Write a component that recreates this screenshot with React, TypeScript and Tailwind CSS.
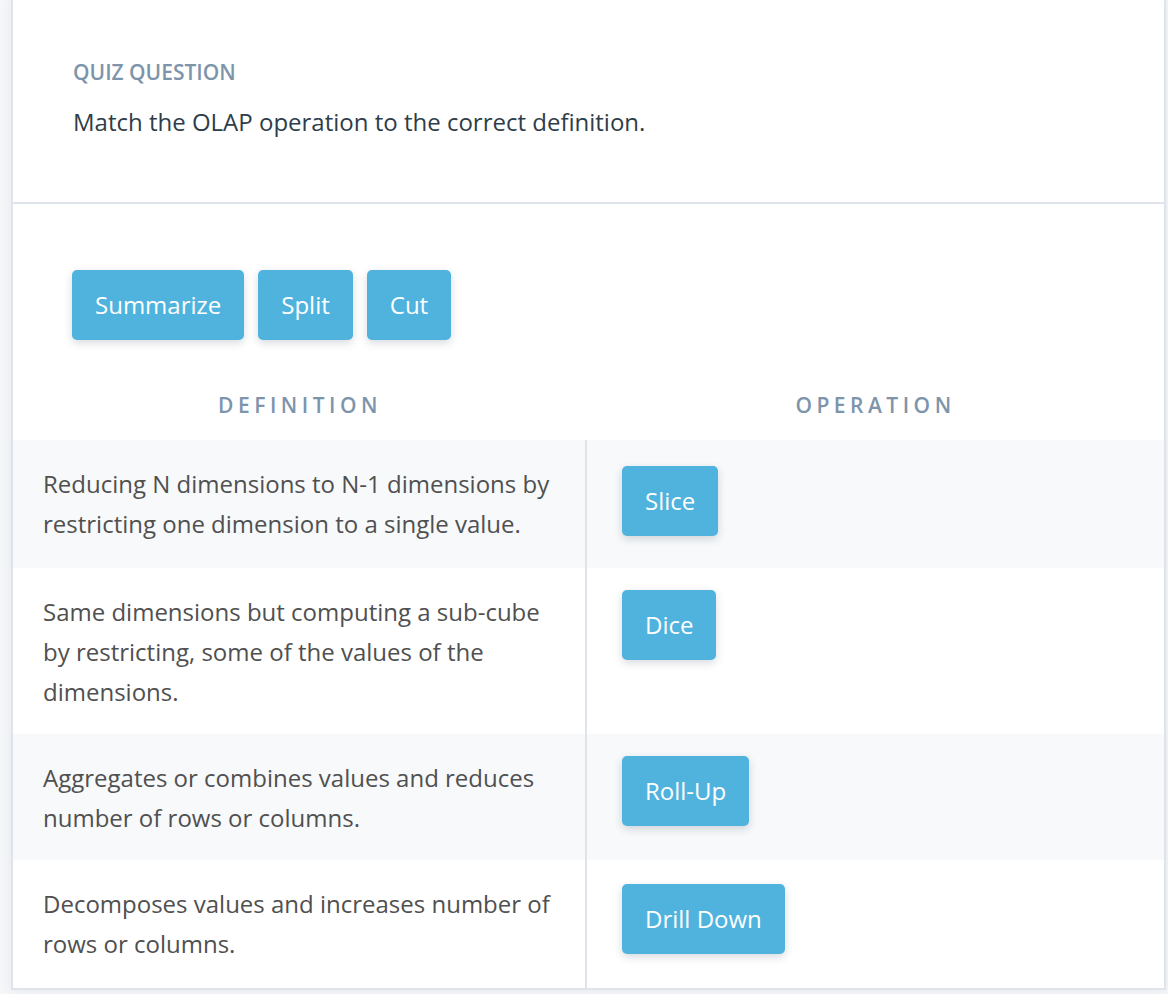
const choices = ["Summarize", "Split", "Cut"];

const rows = [
  {
    definition:
      "Reducing N dimensions to N-1 dimensions by restricting one dimension to a single value.",
    operation: "Slice",
    height: "h-[128px]",
    offset: "pt-[26px]",
  },
  {
    definition:
      "Same dimensions but computing a sub-cube by restricting, some of the values of the dimensions.",
    operation: "Dice",
    height: "h-[166px]",
    offset: "pt-[22px]",
  },
  {
    definition:
      "Aggregates or combines values and reduces number of rows or columns.",
    operation: "Roll-Up",
    height: "h-[126px]",
    offset: "pt-[22px]",
  },
  {
    definition:
      "Decomposes values and increases number of rows or columns.",
    operation: "Drill Down",
    height: "h-[128px]",
    offset: "pt-[24px]",
  },
];

const Chip = ({ label }: { label: string }) => (
  <div className="h-[70px] px-[23px] flex items-center rounded-[5px] bg-[#4fb3de] text-white text-[24px] shadow-[0_3px_8px_rgba(30,50,70,0.18)]">
    {label}
  </div>
);

const App = () => {
  return (
    <div
      className="min-h-[994px] bg-[#f5f7f9] pl-[11px]"
      style={{ fontFamily: '"Open Sans", "Liberation Sans", sans-serif' }}
    >
      <div className="w-[1155px] bg-white border-2 border-t-0 border-[#dfe4eb] shadow-[0_0_12px_rgba(40,60,80,0.08)]">
        {/* Question header */}
        <div className="h-[204px] pt-[60px] pl-[60px] border-b-2 border-[#dfe4eb]">
          <div className="text-[21px] leading-6 font-semibold text-[#7d94ab]">
            QUIZ QUESTION
          </div>
          <div className="mt-[22px] text-[24px] leading-8 text-[#2e3d49]">
            Match the OLAP operation to the correct definition.
          </div>
        </div>

        {/* Answer pool */}
        <div className="pt-[66px] pl-[59px] flex gap-[14px]">
          {choices.map((c) => (
            <Chip key={c} label={c} />
          ))}
        </div>

        {/* Matching table */}
        <div className="mt-[50px] grid grid-cols-[574px_1fr]">
          <div className="h-[50px] text-center text-[21px] leading-[30px] font-semibold tracking-[4.5px] text-[#7d94ab]">
            DEFINITION
          </div>
          <div className="h-[50px] text-center text-[21px] leading-[30px] font-semibold tracking-[4.5px] text-[#7d94ab]">
            OPERATION
          </div>
        </div>
        <div>
          {rows.map((r, i) => (
            <div
              key={r.operation}
              className={`grid grid-cols-[574px_1fr] ${r.height} ${
                i % 2 === 0 ? "bg-[#f7f9fb]" : "bg-white"
              }`}
            >
              <div className="pt-6 pl-[30px] pr-[30px] border-r-2 border-[#dfe4eb] text-[24px] leading-10 text-[#505050]">
                {r.definition}
              </div>
              <div className={`${r.offset} pl-[35px] flex items-start`}>
                <Chip label={r.operation} />
              </div>
            </div>
          ))}
        </div>
      </div>
    </div>
  );
};

export default App;
